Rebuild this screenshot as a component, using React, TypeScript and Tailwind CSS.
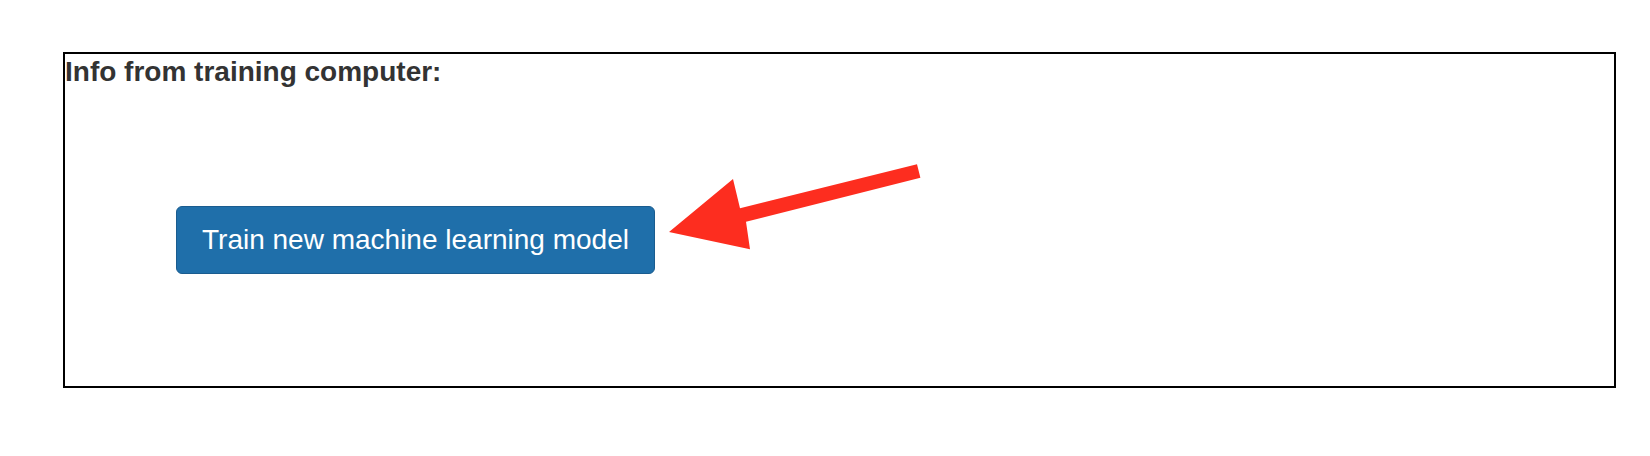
export default function App() {
  return (
    <div
      className="relative w-full h-[456px] bg-white pt-[52px] pl-[63px] box-border"
      style={{ fontFamily: '"Liberation Sans", Arial, sans-serif' }}
    >
      <div className="w-[1553px] h-[336px] border-2 border-black box-border">
        <h3 className="m-0 mt-[2px] text-[28px] leading-[32px] font-bold text-[#333333]">
          Info from training computer:
        </h3>
        <button
          type="button"
          className="ml-[111px] mt-[118px] h-[68px] px-[25px] rounded-[6px] border border-[#1a5c8f] bg-[#1f6faa] text-white text-[28px] leading-[32px]"
        >
          Train new machine learning model
        </button>
      </div>

      {/* annotation arrow pointing at the button */}
      <svg
        className="absolute left-0 top-0 pointer-events-none"
        width="1650"
        height="456"
        viewBox="0 0 1650 456"
      >
        <polygon
          fill="#fd2d1f"
          points="669,232 733,179 740,208.3 917,164.2 920.4,177.8 746,221.7 750,249.3"
        />
      </svg>
    </div>
  );
}
